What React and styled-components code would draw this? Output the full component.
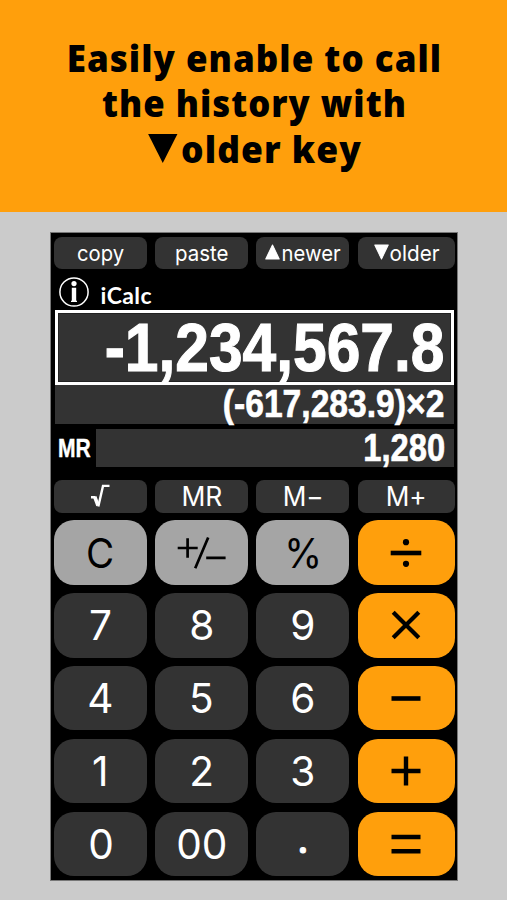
import React from 'react';
import styled, { createGlobalStyle } from 'styled-components';

const keyRows = [
    [['C', 'clear'], ['plusminus', 'clear'], ['%', 'clear'], ['divide', 'op']],
    [['7'], ['8'], ['9'], ['multiply', 'op']],
    [['4'], ['5'], ['6'], ['minus', 'op']],
    [['1'], ['2'], ['3'], ['plus', 'op']],
    [['0'], ['00'], ['.'], ['equal', 'op']],
];

const drawn = {
    plusminus: <path d="M-24.3 -5h20M-14.4 -14.8v19.6M-6.8 15.2L6.2 -15.6M4.2 4.9h19.4" strokeWidth="2.7" />,
    divide: (
        <>
            <path d="M-15.3 0h30.6" strokeWidth="4.6" />
            <circle cy="-10.8" r="3.1" fill="currentColor" stroke="none" />
            <circle cy="10.8" r="3.1" fill="currentColor" stroke="none" />
        </>
    ),
    multiply: <path d="M-12.8 -12.8L12.8 12.8M12.8 -12.8L-12.8 12.8" strokeWidth="4.2" />,
    minus: <path d="M-14.5 0.5h29" strokeWidth="4.6" />,
    plus: <path d="M-14.5 0h29M0 -14.5v29" strokeWidth="4.4" />,
    equal: <path d="M-14.5 -7h29M-14.5 7.3h29" strokeWidth="4.6" />,
};

function KeyFace({ name }) {
    if (name === '.') return <Dot>.</Dot>;
    if (!drawn[name]) return <Fit $sx={name === '%' || name === 'C' ? 0.94 : 0.99}>{name}</Fit>;
    return (
        <Symbol viewBox="-30 -20 60 40">
            {drawn[name]}
        </Symbol>
    );
}

export default function App() {
    return (
        <>
            <GlobalStyle />
            <Page>
                <Banner>
                    <Title>
                        <Line $sx={0.932}>Easily enable to call</Line>
                        <Line $sx={0.925}>the history with</Line>
                        <Line $sx={0.945}>
                            <BigTriangle viewBox="0 0 31 29"><path d="M0 0h31L15.5 29z" /></BigTriangle>
                            older key
                        </Line>
                    </Title>
                </Banner>
                <Calculator>
                    <SmallRow>
                        <SmallKey><Fit $sx={0.92}>copy</Fit></SmallKey>
                        <SmallKey><Fit $sx={0.93}>paste</Fit></SmallKey>
                        <SmallKey><Triangle viewBox="0 0 14 15"><path d="M7 1L13.3 14H.7z" /></Triangle><Fit $sx={0.92} $tight>newer</Fit></SmallKey>
                        <SmallKey><Triangle viewBox="0 0 14 15"><path d="M7 14L13.3 1H.7z" /></Triangle><Fit $sx={0.94} $tight>older</Fit></SmallKey>
                    </SmallRow>
                    <Brand>
                        <InfoIcon viewBox="0 0 32 32">
                            <circle cx="16" cy="16" r="14.1" fill="none" stroke="#fff" strokeWidth="1.5" />
                            <circle cx="16" cy="7.6" r="2.6" />
                            <path d="M13.8 11.8h4.4v13h.8v1.2h-6v-1.2h.8z" />
                        </InfoIcon>
                        <Name>iCalc</Name>
                    </Brand>
                    <Display><Digits $size={69} $sx={0.877}>-1,234,567.8</Digits></Display>
                    <Formula><Digits $size={38} $sx={0.885}>(-617,283.9)×2</Digits></Formula>
                    <MemoryRow>
                        <MemoryLabel><Digits $size={26} $sx={0.81} $left>MR</Digits></MemoryLabel>
                        <MemoryValue><Digits $size={38} $sx={0.86}>1,280</Digits></MemoryValue>
                    </MemoryRow>
                    <SmallRow>
                        <SmallKey>
                            <Root viewBox="0 0 20 24">
                                <path d="M1 13.2h4.2M8.3 22.5L13 1.9h6.5" />
                                <path d="M4.7 12.6L8 21.5" strokeWidth="3.6" />
                            </Root>
                        </SmallKey>
                        <SmallKey $big><Fit $sx={0.98}>MR</Fit></SmallKey>
                        <SmallKey $big><Fit $sx={0.97}>M−</Fit></SmallKey>
                        <SmallKey $big><Fit $sx={0.97}>M+</Fit></SmallKey>
                    </SmallRow>
                    <Keypad>
                        {keyRows.flat().map(([name, kind]) => (
                            <Key key={name} $kind={kind}><KeyFace name={name} /></Key>
                        ))}
                    </Keypad>
                </Calculator>
            </Page>
        </>
    );
}

const GlobalStyle = createGlobalStyle`
body {
    margin: 0;
    background: #cbcbcb;
}
* {
    box-sizing: border-box;
}
`;

const Page = styled.div`
    height: 900px;
    overflow: hidden;
    background: #cbcbcb;
`;

const Banner = styled.header`
    height: 211.5px;
    padding-top: 34.6px;
    background: #ff9f0c;
`;

const Title = styled.h1`
    margin: 0;
    font: 800 37.5px/45.6px "Open Sans", sans-serif;
    letter-spacing: 1.1px;
    text-align: center;
    color: #000;
`;

const Line = styled.span`
    display: block;
    padding-left: 2px;
    white-space: nowrap;
    transform: scaleX(${p => p.$sx});
`;

const BigTriangle = styled.svg`
    width: 33px;
    height: 29px;
    margin-right: 3px;
`;

const Calculator = styled.main`
    width: 407.5px;
    height: 649px;
    margin: 20px 0 0 50px;
    padding: 4px 2.3px 0 2.6px;
    border: 1px solid #777;
    background: #000;
    color: #fff;
    font-family: Inter, sans-serif;
`;

const SmallRow = styled.div`
    display: grid;
    grid-template-columns: 93.7px 93px 93px 97px;
    column-gap: 8.1px;
    height: 32px;
`;

const SmallKey = styled.button`
    display: flex;
    align-items: center;
    justify-content: center;
    padding: 0;
    border: 0;
    border-radius: 8px;
    background: #333;
    color: #fff;
    font: ${p => (p.$big ? 27 : 22)}px Inter, sans-serif;
    font-feature-settings: "calt" 0;
`;

const Fit = styled.span`
    display: block;
    margin: 0 ${p => (p.$tight ? '-2px' : 0)};
    transform: scaleX(${p => p.$sx});
`;

const Dot = styled.span`
    font-feature-settings: "ss07" 0, "ss08" 1;
    padding-bottom: 11px;
    -webkit-text-stroke: 1px #fff;
`;

const Triangle = styled.svg`
    width: 15px;
    height: 16px;
    margin: 0 1px 1px 0;
    fill: #fff;
    stroke: #fff;
    stroke-linejoin: round;
`;

const Brand = styled.div`
    display: flex;
    align-items: center;
    height: 41px;
    padding: 6px 0 0 4px;
`;

const InfoIcon = styled.svg`
    width: 32px;
    height: 32px;
    fill: #fff;
`;

const Name = styled.span`
    margin: 5px 0 0 11px;
    font: bold 23px Lato, sans-serif;
    letter-spacing: 0.4px;
`;

const Display = styled.div`
    display: flex;
    align-items: center;
    justify-content: flex-end;
    width: 399px;
    height: 75px;
    margin-left: 1px;
    padding-right: 6px;
    border: 3px solid #fff;
    outline: 1px solid #222;
    outline-offset: -4px;
    background: #333;
`;

const Formula = styled.div`
    display: flex;
    align-items: center;
    justify-content: flex-end;
    width: 399px;
    height: 39px;
    margin-left: 1px;
    padding-right: 9px;
    background: #333;
`;

const Digits = styled.span`
    font: bold ${p => p.$size}px/1 "Liberation Sans", sans-serif;
    -webkit-text-stroke: ${p => p.$size / 60}px #fff;
    white-space: nowrap;
    transform: scaleX(${p => p.$sx});
    transform-origin: ${p => (p.$left ? 'left' : 'right')} center;
`;

const MemoryRow = styled.div`
    display: flex;
    width: 399px;
    height: 38px;
    margin: 5.7px 0 12.5px 1px;
`;

const MemoryLabel = styled.div`
    display: flex;
    align-items: center;
    width: 41px;
    padding-left: 3px;
`;

const MemoryValue = styled.div`
    display: flex;
    flex: 1;
    align-items: center;
    justify-content: flex-end;
    padding-right: 9px;
    background: #333;
`;

const Root = styled.svg`
    width: 20px;
    height: 24px;
    fill: none;
    stroke: #fff;
    stroke-width: 2.4;
`;

const Keypad = styled.div`
    display: grid;
    grid-template-columns: 93.7px 93px 93px 97px;
    grid-auto-rows: 64.4px;
    gap: 8.4px 8.1px;
    margin-top: 8.8px;
`;

const Key = styled.button`
    display: flex;
    align-items: center;
    justify-content: center;
    padding: 0;
    border: 0;
    border-radius: 20px;
    background: ${p => (p.$kind === 'op' ? '#ff9f0c' : p.$kind === 'clear' ? '#a5a5a5' : '#333')};
    color: ${p => (p.$kind ? '#000' : '#fff')};
    font: 41px Inter, sans-serif;
`;

const Symbol = styled.svg`
    width: 60px;
    height: 40px;
    fill: none;
    stroke: currentColor;
`;
